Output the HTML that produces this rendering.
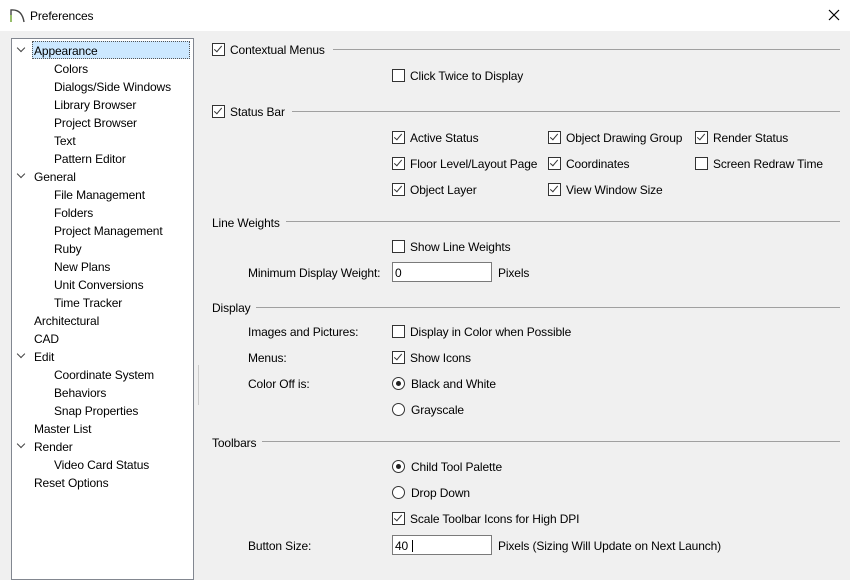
<!DOCTYPE html>
<html><head><style>
body{margin:0;width:850px;height:569px;background:#f0f0f0;font-family:"Liberation Sans",sans-serif;font-size:12px;letter-spacing:-0.12px;color:#000;position:relative;overflow:hidden}
.a{position:absolute;white-space:nowrap;line-height:16px;height:16px}
.t .a{top:1px}
.cb{position:absolute;width:11px;height:11px;border:1px solid #333;background:#fff}
.cb.c::after{content:"";position:absolute;left:3px;top:0px;width:3px;height:7px;border:solid #333;border-width:0 1.3px 1.3px 0;transform:rotate(40deg)}
.rb{position:absolute;width:11px;height:11px;border:1px solid #333;border-radius:50%;background:#fff}
.rb.c::after{content:"";position:absolute;left:3px;top:3px;width:5px;height:5px;border-radius:50%;background:#222}
.hr{position:absolute;height:1px;background:#a0a0a0}
.in{position:absolute;height:20px;border:1px solid #7a7a7a;background:#fff;line-height:20px;padding-left:2px;box-sizing:border-box}
.arr{position:absolute;width:5px;height:5px;border:solid #444;border-width:0 1.3px 1.3px 0;transform:rotate(45deg)}
</style></head><body>
<div style="position:absolute;left:0;top:0;width:850px;height:31px;background:#fff"></div>
<svg style="position:absolute;left:8px;top:6px" width="20" height="18"><path d="M3 16 V4 Q14 3 16 16" fill="none" stroke="#444" stroke-width="1.4"/><path d="M3 9 V16" stroke="#8bc34a" stroke-width="1.4"/></svg>
<div class="a" style="left:30px;top:8px">Preferences</div>
<svg style="position:absolute;left:828px;top:9px" width="12" height="12"><path d="M1 1L11 11M11 1L1 11" stroke="#000" stroke-width="1.2"/></svg>
<div style="position:absolute;left:11px;top:38px;width:181px;height:540px;background:#fff;border:1px solid #828790"></div>
<div style="position:absolute;left:32px;top:41px;width:158px;height:18px;background:#cce8ff;border:1px dotted #555;box-sizing:border-box"></div>
<div class="arr" style="left:18px;top:45px"></div>
<div class="arr" style="left:18px;top:171px"></div>
<div class="arr" style="left:18px;top:351px"></div>
<div class="arr" style="left:18px;top:441px"></div>
<div style="position:absolute;left:0;top:1px">
<div class="a" style="left:34px;top:42px">Appearance</div>
<div class="a" style="left:54px;top:60px">Colors</div>
<div class="a" style="left:54px;top:78px">Dialogs/Side Windows</div>
<div class="a" style="left:54px;top:96px">Library Browser</div>
<div class="a" style="left:54px;top:114px">Project Browser</div>
<div class="a" style="left:54px;top:132px">Text</div>
<div class="a" style="left:54px;top:150px">Pattern Editor</div>
<div class="a" style="left:34px;top:168px">General</div>
<div class="a" style="left:54px;top:186px">File Management</div>
<div class="a" style="left:54px;top:204px">Folders</div>
<div class="a" style="left:54px;top:222px">Project Management</div>
<div class="a" style="left:54px;top:240px">Ruby</div>
<div class="a" style="left:54px;top:258px">New Plans</div>
<div class="a" style="left:54px;top:276px">Unit Conversions</div>
<div class="a" style="left:54px;top:294px">Time Tracker</div>
<div class="a" style="left:34px;top:312px">Architectural</div>
<div class="a" style="left:34px;top:330px">CAD</div>
<div class="a" style="left:34px;top:348px">Edit</div>
<div class="a" style="left:54px;top:366px">Coordinate System</div>
<div class="a" style="left:54px;top:384px">Behaviors</div>
<div class="a" style="left:54px;top:402px">Snap Properties</div>
<div class="a" style="left:34px;top:420px">Master List</div>
<div class="a" style="left:34px;top:438px">Render</div>
<div class="a" style="left:54px;top:456px">Video Card Status</div>
<div class="a" style="left:34px;top:474px">Reset Options</div>
</div>
<div style="position:absolute;left:198px;top:365px;width:1px;height:40px;background:#ccc"></div>

<div class="cb c" style="left:212px;top:43px"></div><div class="a" style="left:230px;top:42px">Contextual Menus</div><div class="hr" style="left:333px;top:49px;width:507px"></div>
<div class="cb" style="left:392px;top:69px"></div><div class="a" style="left:410px;top:68px">Click Twice to Display</div>
<div class="cb c" style="left:212px;top:105px"></div><div class="a" style="left:230px;top:104px">Status Bar</div><div class="hr" style="left:292px;top:111px;width:548px"></div>
<div class="cb c" style="left:392px;top:131px"></div><div class="a" style="left:410px;top:130px">Active Status</div>
<div class="cb c" style="left:548px;top:131px"></div><div class="a" style="left:566px;top:130px">Object Drawing Group</div>
<div class="cb c" style="left:695px;top:131px"></div><div class="a" style="left:713px;top:130px">Render Status</div>
<div class="cb c" style="left:392px;top:157px"></div><div class="a" style="left:410px;top:156px">Floor Level/Layout Page</div>
<div class="cb c" style="left:548px;top:157px"></div><div class="a" style="left:566px;top:156px">Coordinates</div>
<div class="cb" style="left:695px;top:157px"></div><div class="a" style="left:713px;top:156px">Screen Redraw Time</div>
<div class="cb c" style="left:392px;top:183px"></div><div class="a" style="left:410px;top:182px">Object Layer</div>
<div class="cb c" style="left:548px;top:183px"></div><div class="a" style="left:566px;top:182px">View Window Size</div>

<div class="a" style="left:212px;top:215px">Line Weights</div><div class="hr" style="left:286px;top:221px;width:554px"></div>
<div class="cb" style="left:392px;top:240px"></div><div class="a" style="left:410px;top:239px">Show Line Weights</div>
<div class="a" style="left:248px;top:265px">Minimum Display Weight:</div>
<div class="in" style="left:392px;top:262px;width:100px">0</div><div class="a" style="left:498px;top:265px">Pixels</div>

<div class="a" style="left:212px;top:300px">Display</div><div class="hr" style="left:256px;top:307px;width:584px"></div>
<div class="a" style="left:248px;top:324px">Images and Pictures:</div>
<div class="cb" style="left:392px;top:325px"></div><div class="a" style="left:410px;top:324px">Display in Color when Possible</div>
<div class="a" style="left:248px;top:350px">Menus:</div>
<div class="cb c" style="left:392px;top:351px"></div><div class="a" style="left:410px;top:350px">Show Icons</div>
<div class="a" style="left:248px;top:376px">Color Off is:</div>
<div class="rb c" style="left:392px;top:377px"></div><div class="a" style="left:411px;top:376px">Black and White</div>
<div class="rb" style="left:392px;top:403px"></div><div class="a" style="left:411px;top:402px">Grayscale</div>

<div class="a" style="left:212px;top:435px">Toolbars</div><div class="hr" style="left:262px;top:441px;width:578px"></div>
<div class="rb c" style="left:392px;top:460px"></div><div class="a" style="left:411px;top:459px">Child Tool Palette</div>
<div class="rb" style="left:392px;top:486px"></div><div class="a" style="left:411px;top:485px">Drop Down</div>
<div class="cb c" style="left:392px;top:512px"></div><div class="a" style="left:410px;top:511px">Scale Toolbar Icons for High DPI</div>
<div class="a" style="left:248px;top:538px">Button Size:</div>
<div class="in" style="left:392px;top:535px;width:100px">40<span style="display:inline-block;width:1px;height:12px;background:#000;margin-left:4px;vertical-align:-2px"></span></div>
<div class="a" style="left:498px;top:538px">Pixels (Sizing Will Update on Next Launch)</div>
</body></html>
